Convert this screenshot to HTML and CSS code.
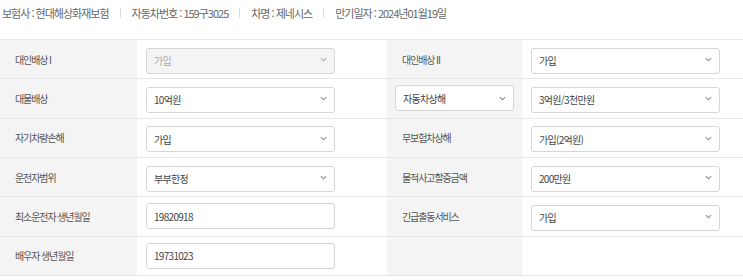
FILE: index.html
```html
<!DOCTYPE html>
<html lang="ko">
<head>
    <meta charset="UTF-8">
    <meta name="viewport" content="width=device-width, initial-scale=1.0">
    <title>보험 정보</title>
    <link rel="stylesheet" href="styles.css">
</head>
<body>
    <div class="info">
        <span>보험사 : 현대해상화재보험</span>
        <span class="bar"></span>
        <span>자동차번호 : 159구3025</span>
        <span class="bar"></span>
        <span>차명 : 제네시스</span>
        <span class="bar"></span>
        <span>만기일자 : 2024년01월19일</span>
    </div>

    <div class="form">
        <div class="th">대인배상 I</div>
        <div class="td"><span class="sel-wrap off"><select class="sel" disabled><option>가입</option></select><svg class="arr" viewBox="0 0 8 5"><path d="M1 1l3 3 3-3"/></svg></span></div>
        <div class="th">대인배상 II</div>
        <div class="td"><span class="sel-wrap"><select class="sel"><option>가입</option></select><svg class="arr" viewBox="0 0 8 5"><path d="M1 1l3 3 3-3"/></svg></span></div>

        <div class="th">대물배상</div>
        <div class="td"><span class="sel-wrap"><select class="sel"><option>10억원</option></select><svg class="arr" viewBox="0 0 8 5"><path d="M1 1l3 3 3-3"/></svg></span></div>
        <div class="th th-sel"><span class="sel-wrap small"><select class="sel"><option>자동차상해</option></select><svg class="arr" viewBox="0 0 8 5"><path d="M1 1l3 3 3-3"/></svg></span></div>
        <div class="td"><span class="sel-wrap"><select class="sel"><option>3억원/3천만원</option></select><svg class="arr" viewBox="0 0 8 5"><path d="M1 1l3 3 3-3"/></svg></span></div>

        <div class="th">자기차량손해</div>
        <div class="td"><span class="sel-wrap"><select class="sel"><option>가입</option></select><svg class="arr" viewBox="0 0 8 5"><path d="M1 1l3 3 3-3"/></svg></span></div>
        <div class="th">무보험차상해</div>
        <div class="td"><span class="sel-wrap"><select class="sel"><option>가입(2억원)</option></select><svg class="arr" viewBox="0 0 8 5"><path d="M1 1l3 3 3-3"/></svg></span></div>

        <div class="th">운전자범위</div>
        <div class="td"><span class="sel-wrap"><select class="sel"><option>부부한정</option></select><svg class="arr" viewBox="0 0 8 5"><path d="M1 1l3 3 3-3"/></svg></span></div>
        <div class="th">물적사고할증금액</div>
        <div class="td"><span class="sel-wrap"><select class="sel"><option>200만원</option></select><svg class="arr" viewBox="0 0 8 5"><path d="M1 1l3 3 3-3"/></svg></span></div>

        <div class="th">최소운전자 생년월일</div>
        <div class="td"><input class="inp" type="text" value="19820918"></div>
        <div class="th">긴급출동서비스</div>
        <div class="td"><span class="sel-wrap"><select class="sel"><option>가입</option></select><svg class="arr" viewBox="0 0 8 5"><path d="M1 1l3 3 3-3"/></svg></span></div>

        <div class="th">배우자 생년월일</div>
        <div class="td"><input class="inp" type="text" value="19731023"></div>
        <div class="th"></div>
        <div class="td"></div>
    </div>
</body>
</html>
```

FILE: styles.css
```css
body {
    margin: 0;
    font-family: "Noto Sans CJK KR", "Noto Sans", sans-serif;
    color: #555;
    background: #fff;
}
.info {
    display: flex;
    align-items: center;
    height: 26px;
    padding-left: 2px;
    margin-bottom: 13px;
    font-size: 11px;
    letter-spacing: -1px;
    color: #666;
}
.info .bar {
    width: 1px;
    height: 10px;
    background: #ddd;
    margin: 0 11px;
}
.form {
    display: grid;
    grid-template-columns: 137px 250px 135px 1fr;
    grid-auto-rows: 39.33px;
    border-top: 1px solid #e6e6e6;
}
.th,
.td {
    display: flex;
    align-items: center;
    border-bottom: 1px solid #e6e6e6;
    box-sizing: border-box;
}
.th {
    background: #f4f4f4;
    padding-left: 15px;
    font-size: 10px;
    letter-spacing: -1.1px;
    color: #555;
}
.th-sel {
    padding-left: 8px;
}
.td {
    padding-left: 9px;
}
.sel-wrap {
    position: relative;
    display: block;
    width: 189px;
    height: 26px;
}
.sel-wrap.small {
    width: 119px;
}
.sel,
.inp {
    box-sizing: border-box;
    height: 26px;
    width: 189px;
    border: 1px solid #d6d6d6;
    border-radius: 3px;
    background: #fff;
    font-family: inherit;
    font-size: 10px;
    letter-spacing: -0.7px;
    color: #444;
    padding: 0 7px;
}
.sel {
    -webkit-appearance: none;
    appearance: none;
    width: 100%;
}
.inp {
    outline: none;
}
.sel:disabled {
    background: #f4f4f4;
    color: #aaa;
    opacity: 1;
}
.arr {
    position: absolute;
    right: 8px;
    top: 11px;
    width: 7px;
    height: 5px;
    fill: none;
    stroke: #888;
    stroke-width: 1.2;
    pointer-events: none;
}
.off .arr {
    stroke: #aaa;
}
```
